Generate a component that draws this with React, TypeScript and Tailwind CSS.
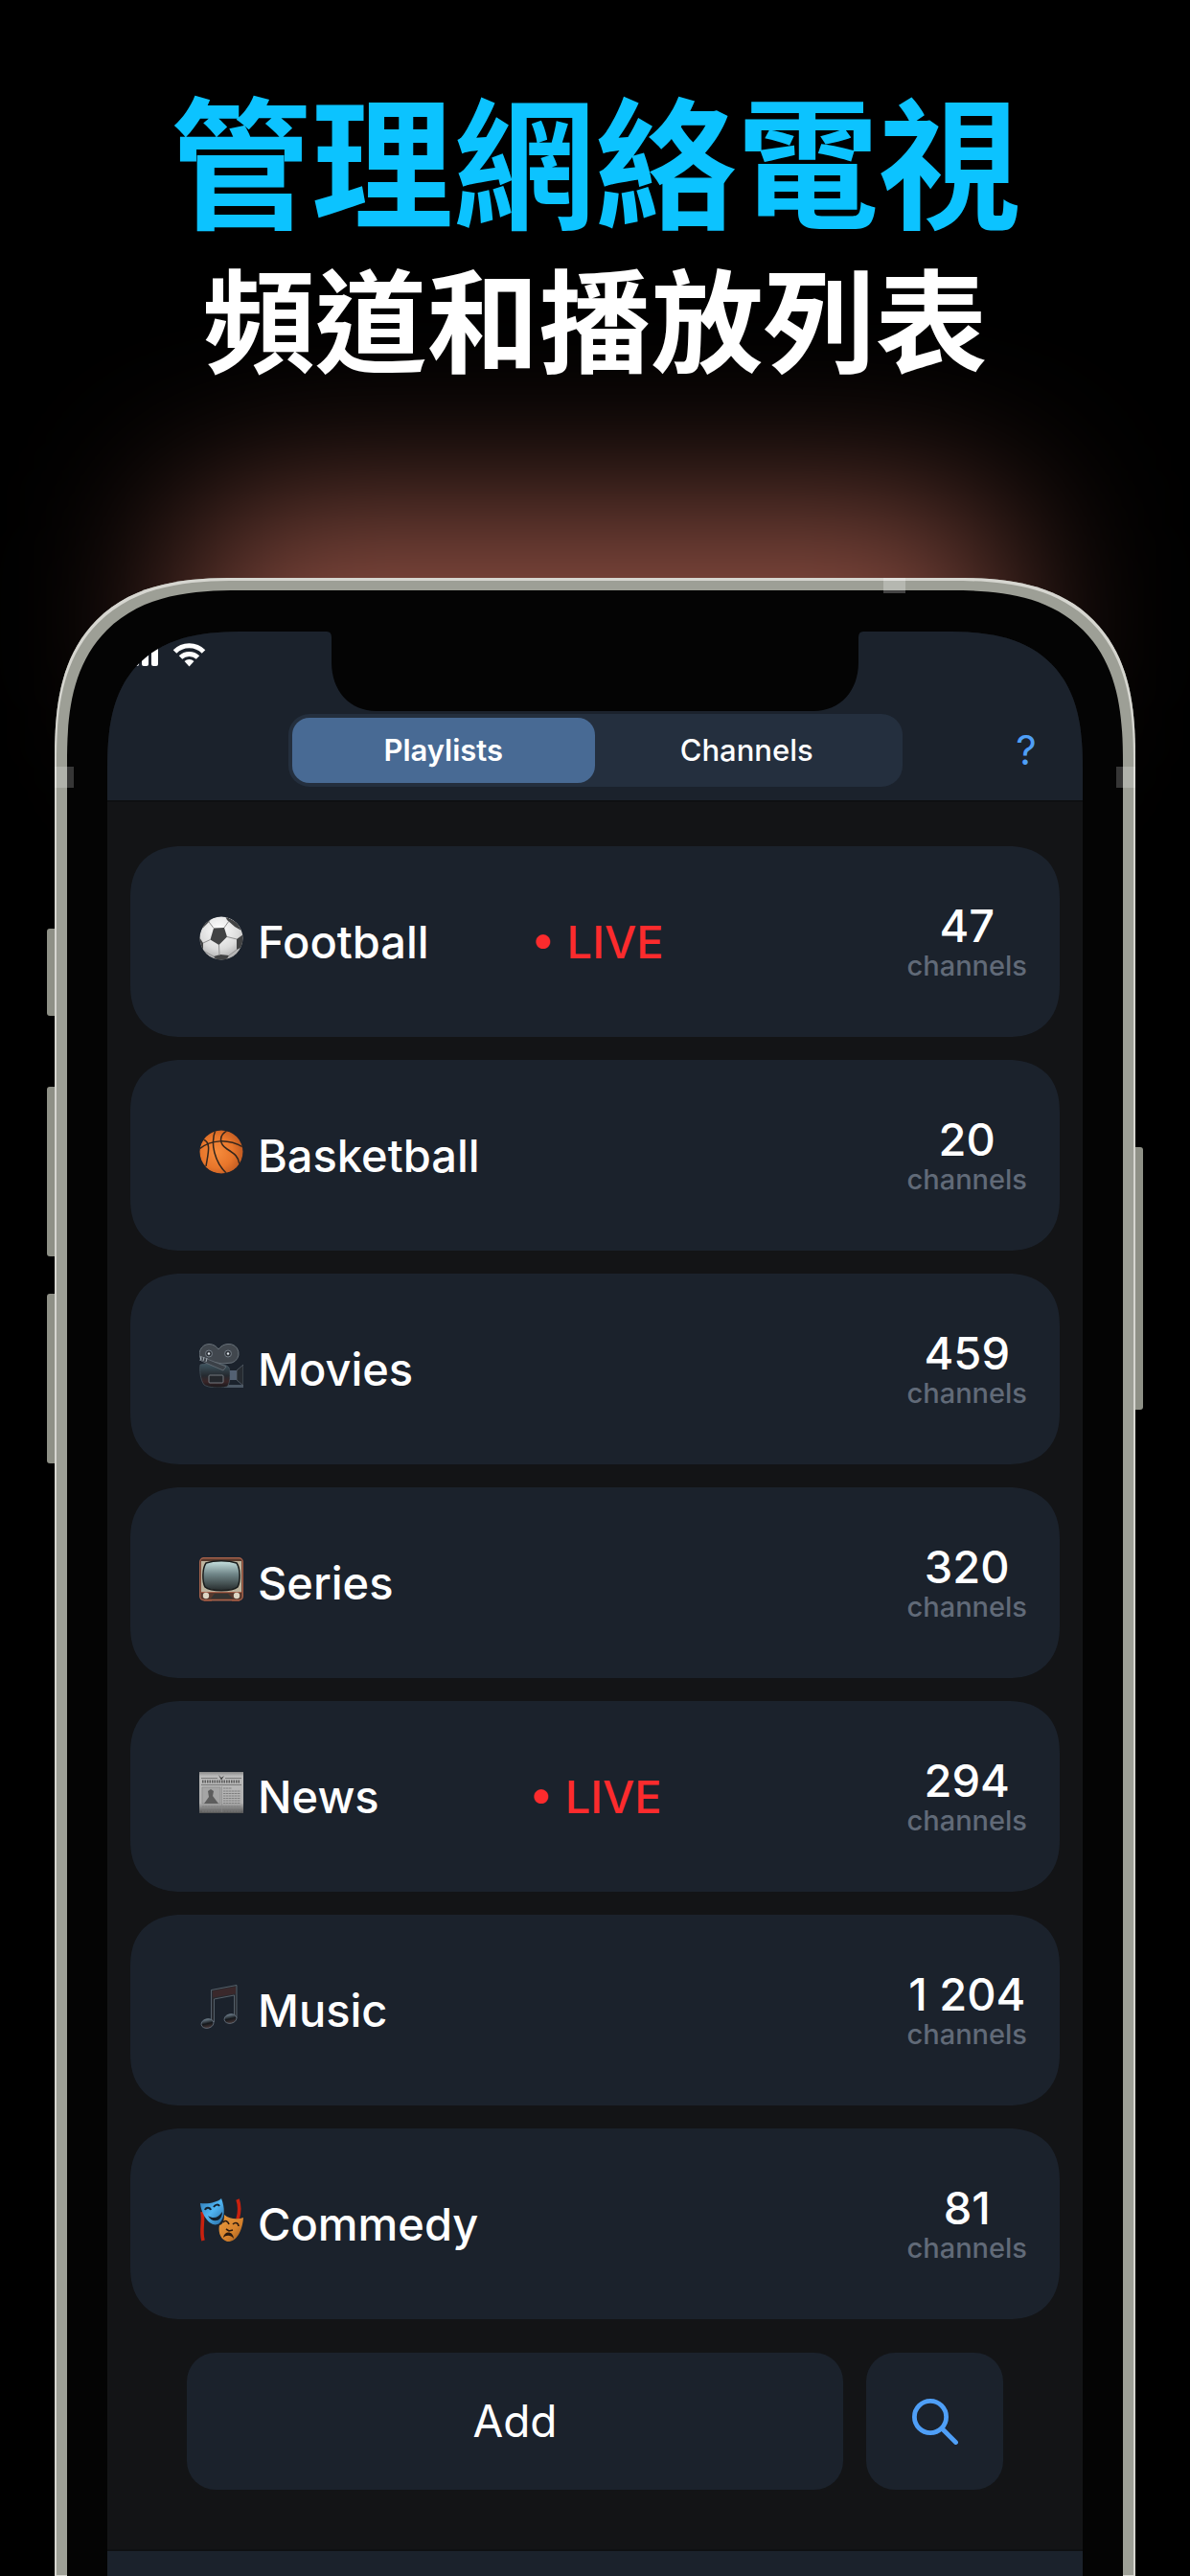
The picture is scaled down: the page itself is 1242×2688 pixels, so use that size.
import React, { useState } from "react";

const FootballIcon = () => (
  <svg viewBox="0 0 46 46" className="size-[46px] shrink-0" aria-hidden="true">
    <defs>
      <radialGradient id="football" cx="0.45" cy="0.3" r="0.75">
        <stop offset="0" stopColor="#ffffff" />
        <stop offset="0.6" stopColor="#dcdcdc" />
        <stop offset="1" stopColor="#a2a2a2" />
      </radialGradient>
      <clipPath id="football-clip">
        <circle cx="23" cy="23" r="22.5" />
      </clipPath>
    </defs>
    <g clipPath="url(#football-clip)">
      <circle cx="23" cy="23" r="23" fill="url(#football)" />
      <g fill="#424344">
        <path d="M15 12.5 26 12 29 21.500 20.500 30 11.500 24.500Z" />
        <path d="M27 0 40 7 44 15 37 11 29 4Z" />
        <path d="M3 8 13 2 10 6 4 12Z" />
        <path d="M39 24 46 19 45 32 39 35Z" />
        <path d="M0 22 4 28 4 36 0 34Z" />
        <path d="M15 42 22 40 31 41 28 46 18 46Z" />
      </g>
      <path
        d="M15 12.500 10 6M26 12 31 5M29 21.500 39 24M20.500 30 21 41M11.500 24.500 4 28M4 36 15 42M31 41 39 35"
        fill="none"
        stroke="#8f8f8f"
        strokeWidth="1"
      />
    </g>
  </svg>
);

const BasketballIcon = () => (
  <svg viewBox="0 0 46 46" className="size-[46px] shrink-0" aria-hidden="true">
    <defs>
      <radialGradient id="basketball" cx="0.4" cy="0.5" r="0.6">
        <stop offset="0" stopColor="#f68c3d" />
        <stop offset="0.6" stopColor="#e8762b" />
        <stop offset="1" stopColor="#bf5a22" />
      </radialGradient>
      <clipPath id="basketball-clip">
        <circle cx="23" cy="23" r="22.500" />
      </clipPath>
    </defs>
    <g clipPath="url(#basketball-clip)">
      <circle cx="23" cy="23" r="23" fill="url(#basketball)" />
      <g fill="none" stroke="#33261d" strokeWidth="1.500">
        <path d="M0 20C12 10 30 9 46 18" />
        <path d="M17 0C11 14 16 34 29 46" />
        <path d="M31 0C19 5 21 15 29 20 37 25 41 28 42 36" />
        <path d="M4 10C13 13 9 25 7 38" />
      </g>
    </g>
  </svg>
);

const MovieIcon = () => (
  <svg viewBox="0 0 46 46" className="size-[46px] shrink-0" aria-hidden="true">
    <defs>
      <linearGradient id="camera" x1="0" y1="0" x2="0" y2="1">
        <stop offset="0" stopColor="#3f5661" />
        <stop offset="0.5" stopColor="#252a30" />
        <stop offset="0.75" stopColor="#3a2527" />
        <stop offset="1" stopColor="#17181c" />
      </linearGradient>
    </defs>
    <path d="M26 43H46V46H26Z" fill="#4a5663" />
    <path
      d="M10 .5C15 .5 18 3 20 6 22 3 26 .5 30 .5A10 10 0 0 1 34 20L24 21 2 17A10.500 10.500 0 0 1 10 .5Z"
      fill="#41474e"
      stroke="#69727a"
      strokeWidth="1"
    />
    <g fill="#30353b" stroke="#737d86">
      <circle cx="10" cy="10.500" r="3.500" />
      <circle cx="30" cy="10.500" r="3.500" />
    </g>
    <circle cx="10" cy="10.500" r="1.200" fill="#dfe5ea" />
    <circle cx="30" cy="10.500" r="1.200" fill="#dfe5ea" />
    <path
      d="M1 22C8 20 28 20 31 25 33 32 32 42 29 45 21 47 9 46 5 43 1 38 0 27 1 22Z"
      fill="url(#camera)"
      stroke="#4b5761"
      strokeWidth=".7"
    />
    <path d="M3 14 28 24 25 28 2 18Z" fill="#3b4148" stroke="#6d767e" strokeWidth=".7" />
    <path d="M2 13 1 18M5 14 4 18M8 15 7 19" stroke="#a7b0b8" strokeWidth="1" />
    <rect x="10" y="33" width="15" height="8" rx="1" fill="#24272c" stroke="#73797f" />
    <path d="M32 28H39V38H32Z" fill="#536173" />
    <path d="M39 28 46 22V44L39 38Z" fill="#262b31" stroke="#59636d" strokeWidth=".8" />
  </svg>
);

const SeriesIcon = () => (
  <svg viewBox="0 0 46 46" className="size-[46px] shrink-0" aria-hidden="true">
    <defs>
      <linearGradient id="tube" x1="0" y1="0" x2="0" y2="1">
        <stop offset="0" stopColor="#c9e3e2" />
        <stop offset="0.45" stopColor="#6f8587" />
        <stop offset="1" stopColor="#262b2c" />
      </linearGradient>
    </defs>
    <path d="M5 43H13V46H5ZM34 43H42V46H34Z" fill="#6c3729" />
    <rect x=".7" y=".7" width="44.600" height="44" rx="4" fill="#57392d" stroke="#a3604a" strokeWidth="1.400" />
    <path d="M2 4H44V36H2Z" fill="#bdb49e" />
    <path
      d="M7 6C16 3 30 3 39 6 43 12 43 25 40 31 34 36 12 36 6 31 3 25 3 12 7 6Z"
      fill="url(#tube)"
      stroke="#191c1c"
      strokeWidth="1.500"
    />
    <path d="M2 36.500H44" stroke="#a3604a" />
    <path d="M16 38H30L35 43H12Z" fill="#343331" />
    <circle cx="7" cy="40" r="3.200" fill="#ddd6c4" />
    <circle cx="39" cy="40" r="3.200" fill="#ddd6c4" />
  </svg>
);

const NewsIcon = () => (
  <svg viewBox="0 0 46 46" className="size-[46px] shrink-0" aria-hidden="true">
    <defs>
      <linearGradient id="paper" x1="0" y1="0" x2="0" y2="1">
        <stop offset="0" stopColor="#8b8b8b" />
        <stop offset="0.1" stopColor="#bababa" />
        <stop offset="0.75" stopColor="#b0b0b0" />
        <stop offset="1" stopColor="#555555" />
      </linearGradient>
    </defs>
    <path d="M0 1H46V44H0Z" fill="url(#paper)" />
    <path d="M2 7.500H19M27 7.500H44M2 14.500H44" stroke="#6b6b6b" strokeWidth=".8" />
    <path d="M20 4 23 7 26 5 23 9.500Z" fill="#3e3e3e" />
    <path d="M3 11H43" stroke="#5c5c5c" strokeWidth="3" strokeDasharray="1.500 1" />
    <path d="M3 17H22V34H3Z" fill="#a5a5a5" stroke="#858585" strokeWidth=".6" />
    <path d="M5 34 10 27 9 21 12 19 15 21 14 26 20 34Z" fill="#5d5d5d" />
    <path
      d="M25 18H34M25 21H43M25 23.500H43M25 26H43M25 28.500H43M25 31H43M25 33.500H43M3 37H43M3 39.500H43M3 42H43"
      stroke="#7b7b7b"
      strokeWidth=".9"
      strokeDasharray="2.500 .5"
    />
    <path d="M23.500 16V43" stroke="#868686" strokeWidth=".6" />
  </svg>
);

const MusicIcon = () => (
  <svg viewBox="0 0 46 46" className="size-[46px] shrink-0" aria-hidden="true">
    <defs>
      <linearGradient id="note" x1="0" y1="0" x2="0" y2="1">
        <stop offset="0" stopColor="#6b7d8a" />
        <stop offset="0.5" stopColor="#15181c" />
        <stop offset="1" stopColor="#4a3838" />
      </linearGradient>
    </defs>
    <path
      d="M12.500 5.500 39 .5V35H36.500V11L15.500 15V39H12.500Z"
      fill="#272a30"
      stroke="#626e79"
      strokeWidth=".8"
    />
    <path d="M14 6.500 38 2V9.500L14 13.500Z" fill="#3a282b" />
    <ellipse cx="8.500" cy="40.500" rx="6.500" ry="4.800" transform="rotate(-12 8.500 40.500)" fill="url(#note)" stroke="#64717d" strokeWidth=".8" />
    <ellipse cx="32.500" cy="35.500" rx="6.500" ry="4.800" transform="rotate(-12 32.500 35.500)" fill="url(#note)" stroke="#64717d" strokeWidth=".8" />
  </svg>
);

const MasksIcon = () => (
  <svg viewBox="0 0 46 46" className="size-[46px] shrink-0" aria-hidden="true">
    <defs>
      <linearGradient id="mask-blue" x1="0" y1="0" x2="1" y2="1">
        <stop offset="0" stopColor="#2d78b4" />
        <stop offset="0.5" stopColor="#50b5f2" />
        <stop offset="1" stopColor="#24679f" />
      </linearGradient>
      <linearGradient id="mask-gold" x1="0" y1="0" x2="1" y2="1">
        <stop offset="0" stopColor="#e99a3f" />
        <stop offset="0.6" stopColor="#d6822c" />
        <stop offset="1" stopColor="#94521d" />
      </linearGradient>
    </defs>
    <path d="M3 14C5 24 1 33 4 44M40 1C43 9 42 15 40 22" fill="none" stroke="#c8210f" strokeWidth="3.600" />
    <path d="M1 5C10 6 19 4 23 0 27 10 27 20 21 26 13 32 2 18 1 5Z" fill="url(#mask-blue)" />
    <path d="M6 12C7 9 11 9 12 12M15 9C17 6 20 6 21 8" fill="none" stroke="#14202b" strokeWidth="2" />
    <path d="M9 18C15 22 20 20 24 14 24 25 13 26 9 18Z" fill="#14202b" />
    <path d="M26 17C32 22 40 22 46 20 45 35 38 46 29 45 20 42 20 32 21 28 25 27 26 23 26 17Z" fill="url(#mask-gold)" />
    <path d="M25 25C27 22 30 24 31 27M35 27C38 24 41 26 41 29M28 32 31 34 35 33" fill="none" stroke="#2a1a10" strokeWidth="1.600" />
    <path d="M25 41C26 34 35 33 36 42 33 38 28 38 25 41Z" fill="#2a1a10" />
  </svg>
);

const SearchIcon = () => (
  <svg
    viewBox="0 0 48 48"
    className="size-12"
    fill="none"
    stroke="currentColor"
    strokeWidth="4.800"
    strokeLinecap="round"
    aria-hidden="true"
  >
    <circle cx="19" cy="19" r="16.600" />
    <path d="M31.500 31.500 45.500 45.500" />
  </svg>
);

const StatusIcons = () => (
  <svg viewBox="0 0 88 26" className="h-[26px] w-[88px]" fill="#ffffff" role="img" aria-label="Signal and Wi-Fi">
    <rect x="0" y="18" width="7" height="7" rx="2" />
    <rect x="10" y="13" width="7" height="12" rx="2" />
    <rect x="20" y="7" width="7" height="18" rx="2" />
    <rect x="30" y="1" width="7" height="24" rx="2" />
    <g fill="none" stroke="#ffffff" strokeWidth="5">
      <path d="M54.500 10A21 21 0 0 1 84.500 10" />
      <path d="M60.500 16A13 13 0 0 1 78.500 16" />
    </g>
    <path d="M64.500 20A7.500 7.500 0 0 1 74.500 20L69.500 25.500Z" />
  </svg>
);

const playlists = [
  { name: "Football", icon: FootballIcon, channels: "47", live: "        • LIVE" },
  { name: "Basketball", icon: BasketballIcon, channels: "20" },
  { name: "Movies", icon: MovieIcon, channels: "459" },
  { name: "Series", icon: SeriesIcon, channels: "320" },
  { name: "News", icon: NewsIcon, channels: "294", live: "            • LIVE" },
  { name: "Music", icon: MusicIcon, channels: "1 204" },
  { name: "Commedy", icon: MasksIcon, channels: "81" },
];

const tabs = ["Playlists", "Channels"];

const PhoneHeader = () => {
  const [active, setActive] = useState("Playlists");

  return (
    <header className="relative border-b-2 border-[#0e1012] bg-[#1b222c] pt-[86px] pb-[14px]">
      <div className="absolute top-[11px] left-[16px]">
        <StatusIcons />
      </div>

      {/* Notch */}
      <svg
        viewBox="0 0 560 83"
        className="absolute top-0 left-1/2 h-[83px] w-[560px] -translate-x-1/2"
        fill="#040404"
        aria-hidden="true"
      >
        <path d="M0 0Q5 0 5 6V32C5 62 24 83 52 83H508C536 83 555 62 555 32V6Q555 0 560 0Z" />
      </svg>

      <div className="grid grid-cols-[1fr_641px_1fr] items-center">
        <div role="tablist" className="col-start-2 grid h-[76px] grid-cols-2 rounded-[22px] bg-[#242f3e] p-1">
          {tabs.map((tab) => (
            <button
              key={tab}
              type="button"
              role="tab"
              aria-selected={active === tab}
              onClick={() => setActive(tab)}
              className={
                active === tab
                  ? "rounded-[18px] bg-[#486a94] text-[31px] font-semibold text-white"
                  : "rounded-[18px] text-[31px] font-medium text-white"
              }
            >
              {tab}
            </button>
          ))}
        </div>
        <button
          type="button"
          aria-label="Help"
          className="mr-[39px] w-[40px] justify-self-end text-[42px] leading-[48px] text-[#4f9ff7]"
        >
          ?
        </button>
      </div>
    </header>
  );
};

const Playlists = () => {
  return (
    <ul className="flex flex-col gap-6 px-6 pt-[46px]">
      {playlists.map(({ name, icon: Icon, channels, live }) => (
        <li
          key={name}
          className="flex h-[199px] items-center justify-between rounded-[54px] bg-[#1b222c] pr-[34px] pl-[72px] [corner-shape:superellipse(1.2)]"
        >
          <div className="flex items-center gap-[15px]">
            <span className="pb-2">
              <Icon />
            </span>
            <p className="text-[47px] leading-[56px] font-medium whitespace-pre text-white">
              {name}
              {live && <span className="ml-1.5 text-[#fc2b2d]">{live}</span>}
            </p>
          </div>
          <p className="flex flex-col items-center font-medium">
            <span className="text-[47px] leading-[50px] text-white">{channels}</span>
            <span className="text-[29px] leading-[34px] text-[#616a78]">channels</span>
          </p>
        </li>
      ))}
    </ul>
  );
};

const Phone = () => {
  return (
    <section className="relative mx-[57px] mt-[215px] flex flex-1 flex-col">
      {/* Side buttons */}
      <div className="absolute top-[366px] -left-2 h-[91px] w-2 rounded-l-[3px] bg-[#8e9086]" />
      <div className="absolute top-[531px] -left-2 h-[177px] w-2 rounded-l-[3px] bg-[#8e9086]" />
      <div className="absolute top-[747px] -left-2 h-[177px] w-2 rounded-l-[3px] bg-[#8e9086]" />
      <div className="absolute top-[594px] -right-2 h-[274px] w-2 rounded-r-[3px] bg-[#8e9086]" />

      <div className="relative flex flex-1 flex-col overflow-hidden rounded-t-[190px] bg-[#9d9f96] px-[13px] pt-[13px] shadow-[inset_0_1px_0_2px_#d6d6d0] [corner-shape:superellipse(1.4)]">
        <div className="flex flex-1 flex-col rounded-t-[180px] bg-[#040404] px-[42px] pt-[43px] [corner-shape:superellipse(1.4)]">
          <div className="flex flex-1 flex-col overflow-hidden rounded-t-[144px] bg-[#131416] [corner-shape:superellipse(1.4)]">
            <PhoneHeader />
            <Playlists />
            <div className="flex gap-6 px-[83px] pt-[35px] pb-[62px]">
              <button
                type="button"
                className="h-[143px] flex-1 rounded-[30px] bg-[#1b222c] text-[46px] text-white"
              >
                Add
              </button>
              <button
                type="button"
                aria-label="Search"
                className="flex size-[143px] items-center justify-center rounded-[30px] bg-[#1b222c] text-[#4f9ff7]"
              >
                <SearchIcon />
              </button>
            </div>
            <footer className="min-h-[26px] flex-1 border-t-2 border-[#0e1012] bg-[#1b222c]" />
          </div>
        </div>

        {/* Antenna bands */}
        <div className="absolute top-0 right-[240px] h-4 w-[23px] bg-white/25" />
        <div className="absolute top-[197px] left-0 h-[22px] w-5 bg-white/20" />
        <div className="absolute top-[197px] right-0 h-[22px] w-5 bg-white/20" />
      </div>
    </section>
  );
};

const App = () => {
  return (
    <main className="relative flex min-h-screen flex-col overflow-hidden bg-black font-['Inter','Noto_Sans_CJK_TC',sans-serif]">
      {/* Glow behind the phone */}
      <div className="absolute inset-x-[195px] top-[535px] h-[220px] rounded-[60px] bg-[#985548] blur-[90px]" />

      <h1 className="relative pt-[89px] text-center font-['Noto_Sans_CJK_TC',sans-serif] font-bold">
        <span className="block text-[148px] leading-[148px] text-[#0cc3ff]">管理網絡電視</span>
        <span className="mt-[34px] block text-[117px] leading-[117px] text-white">頻道和播放列表</span>
      </h1>

      <Phone />
    </main>
  );
};

export default App;
